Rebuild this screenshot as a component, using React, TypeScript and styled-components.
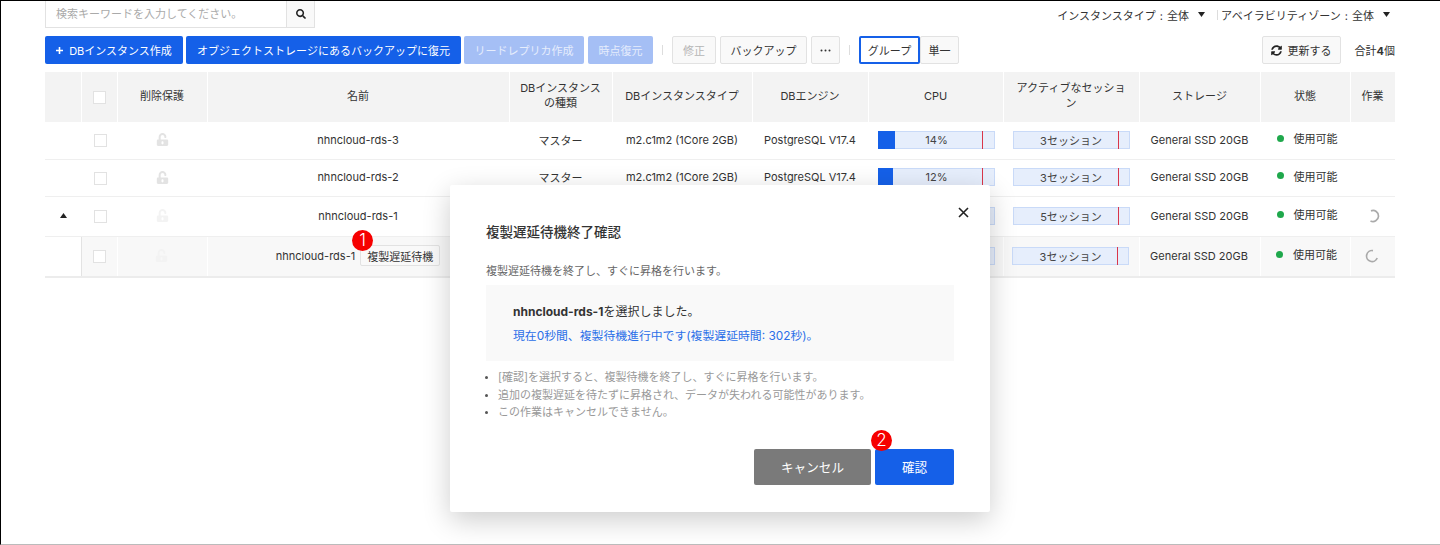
import React from "react";
import styled, { createGlobalStyle } from "styled-components";
import { FaSearch, FaSyncAlt, FaUnlockAlt } from "react-icons/fa";

const Global = createGlobalStyle`
  html, body { margin: 0; padding: 0; background: #fff; }
  body { font-family: Inter, "Noto Sans CJK JP", sans-serif; font-size: 11px; color: #333; }
  * { box-sizing: border-box; }
`;

const COLS = "37px 36px 90px 302px 103px 140px 116px 135px 136px 121px 90px 44px";

const Page = styled.div`
  position: relative;
  width: 1440px;
  height: 545px;
  overflow: hidden;
  border-top: 1px solid #000;
  border-left: 1px solid #000;
  border-bottom: 1px solid #bbb;
  padding: 0 45px 0 44px;
`;
const TopRow = styled.div`
  display: flex;
  justify-content: space-between;
  align-items: flex-start;
  height: 27px;
`;
const Search = styled.div`
  display: flex;
  width: 270px;
  height: 27px;
  border: 1px solid #e2e2e2;
  border-top: 0;
`;
const SearchInput = styled.div`
  flex: 1;
  color: #aaa;
  padding-left: 10px;
  line-height: 27px;
`;
const SearchBtn = styled.div`
  width: 28px;
  background: #f9f9f9;
  border-left: 1px solid #e2e2e2;
  display: flex;
  align-items: center;
  justify-content: center;
  color: #222;
  font-size: 10px;
`;
const Filters = styled.div`
  display: flex;
  align-items: center;
  height: 27px;
  color: #333;
  padding-right: 5px;
  word-spacing: 1px;
`;
const Caret = styled.svg`
  width: 7px;
  height: 5px;
  margin: 0 0 0 9px;
`;
const VBar = styled.span`
  width: 1px;
  height: 10px;
  background: #ddd;
  margin: 0 3px 0 12px;
`;
const Toolbar = styled.div`
  display: flex;
  align-items: center;
  height: 28px;
  margin-top: 8px;
`;
const Cluster = styled.div<{ $gap: number }>`
  display: flex;
  align-items: center;
  gap: ${(p) => p.$gap}px;
`;
const Btn = styled.div<{ $w: number; $kind?: "primary" | "light" | "plain" | "muted" | "selected" }>`
  width: ${(p) => p.$w}px;
  height: 28px;
  border-radius: 2px;
  display: flex;
  align-items: center;
  justify-content: center;
  gap: 6px;
  flex: none;
  background: ${(p) => (p.$kind === "primary" ? "#1560e8" : p.$kind === "light" ? "#a5bff5" : p.$kind === "selected" ? "#fff" : "#f9f9f9")};
  color: ${(p) => (p.$kind === "primary" ? "#fff" : p.$kind === "light" ? "#e6edfc" : p.$kind === "muted" ? "#b5b5b5" : "#333")};
  border: ${(p) => (p.$kind === "selected" ? "2px solid #1560e8" : p.$kind === "primary" || p.$kind === "light" ? "0" : "1px solid #e2e2e2")};
`;
const PlusIcon = styled.svg`
  width: 7px;
  height: 7px;
`;
const DotsIcon = styled.svg`
  width: 11px;
  height: 3px;
`;
const RefreshIcon = styled(FaSyncAlt)`
  color: #222;
`;
const Sep = styled.span`
  width: 1px;
  height: 10px;
  background: #ddd;
  margin: 0 9px;
`;
const Spacer = styled.div`
  flex: 1;
`;
const Total = styled.span`
  margin-left: 14px;
  b { font-weight: 700; }
`;
const Table = styled.div`
  margin-top: 8px;
`;
const HeaderRow = styled.div`
  display: grid;
  grid-template-columns: ${COLS};
  height: 50px;
`;
const HeadCell = styled.div`
  background: #f3f3f3;
  border-right: 1px solid #fff;
  display: flex;
  align-items: center;
  justify-content: center;
  text-align: center;
  line-height: 15px;
  padding: 0 10px 2px 9px;
  &:last-child { border-right: 0; }
`;
const Row = styled.div<{ $h: number; $child?: boolean }>`
  display: grid;
  grid-template-columns: ${COLS};
  height: ${(p) => p.$h}px;
  border-bottom: ${(p) => (p.$child ? "2px solid #ececec" : "1px solid #efefef")};
`;
const Cell = styled.div<{ $child?: boolean }>`
  display: flex;
  align-items: center;
  justify-content: center;
  gap: 4px;
  padding: 0 2px 2px 0;
  background: ${(p) => (p.$child ? "#f8f8f8" : "#fff")};
  border-right: ${(p) => (p.$child ? "1px solid #fff" : "0")};
  white-space: nowrap;
  position: relative;
  &:last-child { border-right: 0; }
`;
const LeadCell = styled(Cell)<{ $child?: boolean }>`
  background: #fff;
  padding-right: 0;
  border-right: ${(p) => (p.$child ? "1px solid #e3e3e3" : "0")};
`;
const CheckCell = styled(Cell)`
  padding-right: 0;
`;
const CpuCell = styled(Cell)`
  padding-right: 0;
`;
const Check = styled.span`
  width: 13px;
  height: 13px;
  margin-top: 2px;
  background: #fff;
  border: 1px solid #e2e2e2;
`;
const Lock = styled.span<{ $faint?: boolean }>`
  color: ${(p) => (p.$faint ? "#f3f3f3" : "#e3e3e3")};
  font-size: 13px;
  display: flex;
`;
const Bar = styled.div`
  position: relative;
  width: 117px;
  height: 18px;
  background: #e6eefc;
  border: 1px solid #c9daf8;
  display: flex;
  align-items: center;
  justify-content: center;
  color: #444;
`;
const BarFill = styled.span`
  position: absolute;
  left: -1px;
  top: -1px;
  bottom: -1px;
  background: #1560e8;
`;
const BarMark = styled.span<{ $left: number }>`
  position: absolute;
  top: -1px;
  bottom: -1px;
  left: ${(p) => p.$left}px;
  width: 1px;
  background: #d9364a;
`;
const Status = styled.div`
  display: flex;
  align-items: center;
  gap: 10px;
  margin: -3px 0 0 4px;
`;
const Dot = styled.span`
  width: 7px;
  height: 7px;
  border-radius: 50%;
  background: #1fa84c;
`;
const ChildTag = styled.span`
  height: 21px;
  padding: 0 6px;
  border: 1px solid #e2e2e2;
  border-radius: 2px;
  background: #f9f9f9;
  display: flex;
  align-items: center;
  font-size: 11px;
`;
const NameWrap = styled.div`
  display: flex;
  align-items: center;
  gap: 5px;
  margin-left: 1px;
`;
const Marker = styled.span<{ $x: number; $y: number }>`
  position: absolute;
  left: ${(p) => p.$x}px;
  top: ${(p) => p.$y}px;
  width: 21px;
  height: 21px;
  border-radius: 50%;
  background: #f60000;
  color: #fff;
  font-size: 17px;
  line-height: 21px;
  text-align: center;
  font-weight: 300;
  z-index: 5;
`;
const Modal = styled.div`
  position: absolute;
  left: 449px;
  top: 184px;
  width: 540px;
  height: 327px;
  background: #fff;
  border-radius: 2px;
  box-shadow: 0 8px 28px rgba(0, 0, 0, 0.2);
  padding: 37px 36px 0;
  z-index: 3;
`;
const Close = styled.svg`
  position: absolute;
  top: 22px;
  right: 21px;
  width: 11px;
  height: 11px;
`;
const Title = styled.h2`
  margin: 0;
  font-size: 13.5px;
  font-weight: 500;
  line-height: 20px;
  color: #333;
`;
const Desc = styled.p`
  margin: 19px 0 0;
  line-height: 20px;
  color: #666;
`;
const InfoBox = styled.div`
  margin-top: 4px;
  height: 76px;
  background: #f9f9f9;
  padding: 17px 27px 0;
  line-height: 20px;
  font-size: 12px;
  b { font-weight: 700; }
`;
const BlueLine = styled.div`
  color: #2a6fe8;
  margin-top: 4px;
  font-size: 11.85px;
`;
const Notes = styled.ul`
  margin: 8px 0 0;
  padding: 0 0 0 12px;
  color: #999;
  line-height: 17.5px;
  li::marker { color: #555; font-size: 9px; }
`;
const Actions = styled.div`
  display: flex;
  justify-content: flex-end;
  gap: 4px;
  margin-top: 27px;
`;
const ModalBtn = styled.div<{ $w: number; $bg: string }>`
  width: ${(p) => p.$w}px;
  height: 36px;
  background: ${(p) => p.$bg};
  color: #fff;
  font-size: 12.6px;
  border-radius: 2px;
  display: flex;
  align-items: center;
  justify-content: center;
`;

const Tri = () => (
  <Caret viewBox="0 0 7 5">
    <path d="M0 0h7L3.5 5z" fill="#222" />
  </Caret>
);
const UpTri = styled.svg`
  width: 7px;
  height: 5px;
`;
const SpinnerSvg = styled.svg<{ $dx: number }>`
  width: 16px;
  height: 16px;
  margin-left: ${(p) => p.$dx}px;
`;

type RowData = {
  name: string;
  cpu?: number;
  cpuText?: string;
  session: string;
  faint?: boolean;
  lead?: boolean;
  child?: boolean;
  h: number;
  spin?: "a" | "b";
};

const rows: RowData[] = [
  { name: "nhncloud-rds-3", cpu: 17, cpuText: "14%", session: "3セッション", h: 38 },
  { name: "nhncloud-rds-2", cpu: 15, cpuText: "12%", session: "3セッション", h: 37 },
  { name: "nhncloud-rds-1", cpu: 10, cpuText: "", session: "5セッション", faint: true, lead: true, h: 40, spin: "a" },
  { name: "nhncloud-rds-1", cpu: 10, cpuText: "", session: "3セッション", faint: true, child: true, h: 41, spin: "b" },
];

export default function App() {
  return (
    <Page>
      <Global />
      <TopRow>
        <Search>
          <SearchInput>検索キーワードを入力してください。</SearchInput>
          <SearchBtn><FaSearch /></SearchBtn>
        </Search>
        <Filters>
          インスタンスタイプ : 全体<Tri />
          <VBar />
          アベイラビリティゾーン : 全体<Tri />
        </Filters>
      </TopRow>
      <Toolbar>
        <Cluster $gap={4}>
          <Cluster $gap={3}>
            <Btn $w={138} $kind="primary">
              <PlusIcon viewBox="0 0 7 7"><path d="M3.5 0v7M0 3.5h7" stroke="#fff" strokeWidth="1.6" /></PlusIcon>
              DBインスタンス作成
            </Btn>
            <Btn $w={275} $kind="primary">オブジェクトストレージにあるバックアップに復元</Btn>
            <Btn $w={120} $kind="light">リードレプリカ作成</Btn>
          </Cluster>
          <Btn $w={65} $kind="light">時点復元</Btn>
        </Cluster>
        <Sep />
        <Cluster $gap={4}>
          <Btn $w={44} $kind="muted">修正</Btn>
          <Btn $w={87}>バックアップ</Btn>
          <Btn $w={29}>
            <DotsIcon viewBox="0 0 11 3">
              <circle cx="1.5" cy="1.5" r="1" fill="#333" />
              <circle cx="5.5" cy="1.5" r="1" fill="#333" />
              <circle cx="9.5" cy="1.5" r="1" fill="#333" />
            </DotsIcon>
          </Btn>
        </Cluster>
        <Sep />
        <Cluster $gap={0}>
          <Btn $w={61} $kind="selected">グループ</Btn>
          <Btn $w={39}>単一</Btn>
        </Cluster>
        <Spacer />
        <Btn $w={79}><RefreshIcon />更新する</Btn>
        <Total>合計<b>4</b>個</Total>
      </Toolbar>
      <Table>
        <HeaderRow>
          <HeadCell />
          <HeadCell><Check /></HeadCell>
          <HeadCell>削除保護</HeadCell>
          <HeadCell>名前</HeadCell>
          <HeadCell>DBインスタンスの種類</HeadCell>
          <HeadCell>DBインスタンスタイプ</HeadCell>
          <HeadCell>DBエンジン</HeadCell>
          <HeadCell>CPU</HeadCell>
          <HeadCell>アクティブなセッション</HeadCell>
          <HeadCell>ストレージ</HeadCell>
          <HeadCell>状態</HeadCell>
          <HeadCell>作業</HeadCell>
        </HeaderRow>
        {rows.map((r, i) => (
          <Row key={i} $h={r.h} $child={r.child}>
            <LeadCell $child={r.child}>
              {r.lead && (
                <UpTri viewBox="0 0 7 5"><path d="M0 5h7L3.5 0z" fill="#222" /></UpTri>
              )}
            </LeadCell>
            <CheckCell $child={r.child}><Check /></CheckCell>
            <Cell $child={r.child}><Lock $faint={r.faint}><FaUnlockAlt /></Lock></Cell>
            <Cell $child={r.child}>
              {r.child ? (
                <NameWrap>{r.name}<ChildTag>複製遅延待機</ChildTag></NameWrap>
              ) : (
                r.name
              )}
            </Cell>
            <Cell $child={r.child}>{!r.child && !r.lead ? "マスター" : ""}</Cell>
            <Cell $child={r.child}>{!r.child && !r.lead ? "m2.c1m2 (1Core 2GB)" : ""}</Cell>
            <Cell $child={r.child}>{!r.child && !r.lead ? "PostgreSQL V17.4" : ""}</Cell>
            <CpuCell $child={r.child}>
              <Bar>
                <BarFill style={{ width: r.cpu }} />
                {r.cpuText}
                <BarMark $left={103} />
              </Bar>
            </CpuCell>
            <Cell $child={r.child}>
              <Bar>
                {r.session}
                <BarMark $left={104} />
              </Bar>
            </Cell>
            <Cell $child={r.child}>General SSD 20GB</Cell>
            <Cell $child={r.child}>
              <Status><Dot />使用可能</Status>
            </Cell>
            <CheckCell $child={r.child}>
              {r.spin === "a" && (
                <SpinnerSvg $dx={0} viewBox="0 0 16 16">
                  <path d="M6 2.9A5.5 5.5 0 1 1 5.5 12.9" fill="none" stroke="#aaa" strokeWidth="1.7" />
                </SpinnerSvg>
              )}
              {r.spin === "b" && (
                <SpinnerSvg $dx={-2} viewBox="0 0 16 16">
                  <path d="M9 2.6A5.5 5.5 0 1 0 13.2 10" fill="none" stroke="#aaa" strokeWidth="1.7" />
                </SpinnerSvg>
              )}
            </CheckCell>
          </Row>
        ))}
      </Table>
      <Marker $x={351} $y={229}>1</Marker>
      <Marker $x={870} $y={429}>2</Marker>
      <Modal>
        <Close viewBox="0 0 11 11">
          <path d="M1 1l9 9M10 1l-9 9" stroke="#222" strokeWidth="1.6" />
        </Close>
        <Title>複製遅延待機終了確認</Title>
        <Desc>複製遅延待機を終了し、すぐに昇格を行います。</Desc>
        <InfoBox>
          <div><b>nhncloud-rds-1</b>を選択しました。</div>
          <BlueLine>現在0秒間、複製待機進行中です(複製遅延時間: 302秒)。</BlueLine>
        </InfoBox>
        <Notes>
          <li>[確認]を選択すると、複製待機を終了し、すぐに昇格を行います。</li>
          <li>追加の複製遅延を待たずに昇格され、データが失われる可能性があります。</li>
          <li>この作業はキャンセルできません。</li>
        </Notes>
        <Actions>
          <ModalBtn $w={117} $bg="#7a7a7a">キャンセル</ModalBtn>
          <ModalBtn $w={79} $bg="#1560e8">確認</ModalBtn>
        </Actions>
      </Modal>
    </Page>
  );
}
